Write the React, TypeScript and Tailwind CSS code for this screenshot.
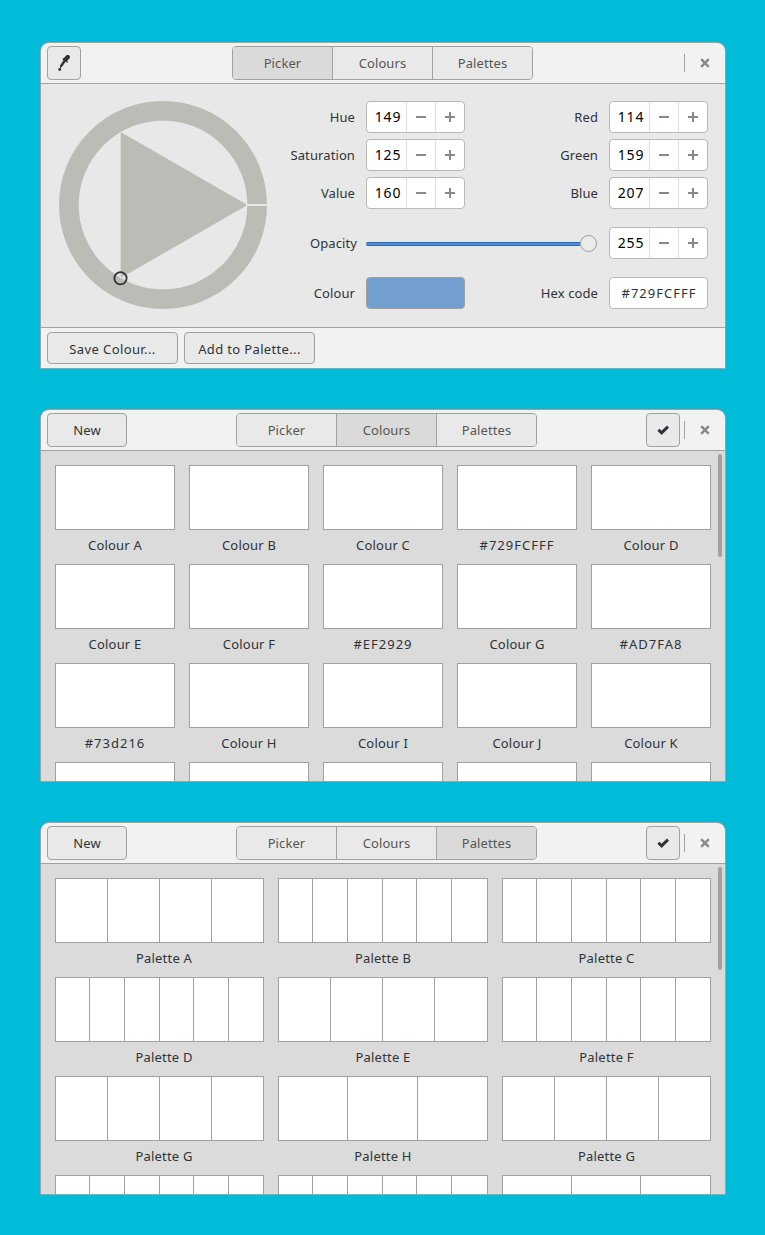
import type { ReactNode } from "react";

const TABS = ["Picker", "Colours", "Palettes"] as const;
type Tab = (typeof TABS)[number];

const COLOURS = [
  "Colour A", "Colour B", "Colour C", "#729FCFFF", "Colour D",
  "Colour E", "Colour F", "#EF2929", "Colour G", "#AD7FA8",
  "#73d216", "Colour H", "Colour I", "Colour J", "Colour K",
  "", "", "", "", "",
];

const PALETTES: [string, number][] = [
  ["Palette A", 4], ["Palette B", 6], ["Palette C", 6],
  ["Palette D", 6], ["Palette E", 4], ["Palette F", 6],
  ["Palette G", 4], ["Palette H", 3], ["Palette G", 4],
  ["", 6], ["", 6], ["", 3],
];

function Button({ className, children }: { className: string; children: ReactNode }) {
  return (
    <button className={`flex shrink-0 items-center justify-center rounded-[4px] border border-[#a1a1a1] bg-[#e9e9e9] ${className}`}>
      {children}
    </button>
  );
}

function Switcher({ active }: { active: Tab }) {
  return (
    <div className="flex h-[34px] w-[301px] overflow-hidden rounded-[4px] border border-[#a1a1a1] text-[#555753]">
      {TABS.map((tab, i) => (
        <button
          key={tab}
          className={`flex items-center justify-center ${i < 2 ? "w-[100px] border-r border-[#a1a1a1]" : "w-[99px]"} ${tab === active ? "bg-[#dadada]" : "bg-[#e9e9e9]"}`}
        >
          {tab}
        </button>
      ))}
    </div>
  );
}

function Close() {
  return (
    <svg width="10" height="10" viewBox="0 0 10 10" className="mr-[15px] ml-[15px]">
      <path d="M1.200 1.200 8.800 8.800M8.800 1.200 1.200 8.800" stroke="#888a85" strokeWidth="2.400" />
    </svg>
  );
}

function Check() {
  return (
    <svg width="12" height="10" viewBox="0 0 12 10">
      <path d="M1.400 4.700 4.600 7.900 11 1.700" fill="none" stroke="#2e3436" strokeWidth="3" />
    </svg>
  );
}

function Dropper() {
  return (
    <svg width="16" height="16" viewBox="0 0 16 16" fill="none" stroke="#2e3436" strokeLinecap="round">
      <path d="M9.700 4.300 11.800 2" strokeWidth="4.300" />
      <path d="M7.200 3.900 11.200 7" strokeWidth="1.400" />
      <path d="M8.700 5.700 5.200 10.900" strokeWidth="2.500" />
      <circle cx="3.700" cy="14.500" r="1.400" fill="#2e3436" stroke="none" />
      <path d="M5.200 11 4.100 13" strokeWidth="1" />
    </svg>
  );
}

function Window({ active, left, right, className, children }: {
  active: Tab; left: ReactNode; right?: ReactNode; className: string; children: ReactNode;
}) {
  return (
    <section className={`flex w-[686px] flex-col overflow-hidden rounded-t-[9px] border border-[#a1a1a1] ${className}`}>
      <header className={`grid h-[41px] shrink-0 items-center border-b border-[#a1a1a1] bg-[#f2f2f2] ${right ? "grid-cols-[195px_301px_1fr]" : "grid-cols-[191px_301px_1fr]"}`}>
        <div className="pl-[6px]">{left}</div>
        <Switcher active={active} />
        <div className="flex items-center justify-end">
          {right}
          <span className="ml-1 h-[18px] w-px bg-[#a1a1a1]" />
          <Close />
        </div>
      </header>
      {children}
    </section>
  );
}

function Spin({ value }: { value: number }) {
  return (
    <div className="flex h-8 w-[99px] rounded-[4px] border border-[#b8b9b4] bg-white text-black">
      <span className="flex w-[39px] items-center justify-center pl-[3px] text-[14px] tracking-[0.8px]">{value}</span>
      <span className="flex w-[29px] items-center justify-center border-l border-[#dedede]">
        <svg width="12" height="12" viewBox="0 0 12 12"><path d="M1 5h10v2H1z" fill="#888a85" /></svg>
      </span>
      <span className="flex w-[29px] items-center justify-center border-l border-[#dedede]">
        <svg width="12" height="12" viewBox="0 0 12 12"><path d="M1 5h10v2H1zM5 1h2v10H5z" fill="#888a85" /></svg>
      </span>
    </div>
  );
}

function Label({ children, className = "" }: { children: string; className?: string }) {
  return <span className={`text-right ${className}`}>{children}</span>;
}

function Wheel() {
  return (
    <svg width="210" height="210" viewBox="58 100 210 210" className="shrink-0">
      <circle cx="163" cy="205" r="94.150" fill="none" stroke="#babdb6" strokeWidth="19.700" />
      <path d="M120.700 132v146L247.500 205Z" fill="#babdb6" />
      <path d="M246 204h22v2h-22z" fill="#e8e8e8" />
      <path d="m118 275.500 3 1.500 2-1-2.500 2z" fill="#e8e8e8" />
      <circle cx="120.500" cy="278.200" r="6.100" fill="none" stroke="#2e3436" strokeWidth="1.800" />
    </svg>
  );
}

function PickerBody() {
  return (
    <>
      <div className="flex h-[243px] bg-[#e8e8e8] pt-4 pl-[17px]">
        <Wheel />
        <div className="mt-px ml-[18px] flex w-[422px] flex-col">
          <div className="flex flex-col gap-[6px]">
            {([["Hue", 149, "Red", 114], ["Saturation", 125, "Green", 159], ["Value", 160, "Blue", 207]] as const).map(([a, x, b, y]) => (
              <div key={a} className="flex items-center">
                <Label className="w-[69px]">{a}</Label>
                <div className="ml-[11px]"><Spin value={x} /></div>
                <Label className="w-[133px]">{b}</Label>
                <div className="ml-[11px]"><Spin value={y} /></div>
              </div>
            ))}
          </div>
          <div className="mt-[18px] flex items-center">
            <Label className="w-[71px]">Opacity</Label>
            <div className="ml-[9px] flex w-[231px] items-center">
              <span className="mt-px h-1 w-[214px] rounded-l-full border-y border-[#2f66ad] bg-[#4a90d9]" />
              <span className="h-[17px] w-[17px] rounded-full border border-[#999] bg-[#ebebeb]" />
            </div>
            <div className="ml-[12px]"><Spin value={255} /></div>
          </div>
          <div className="mt-[18px] flex items-center">
            <Label className="w-[69px]">Colour</Label>
            <span className="ml-[11px] h-8 w-[99px] rounded-[4px] border border-[#a1a1a1] bg-[#729fcf]" />
            <Label className="w-[133px]">Hex code</Label>
            <span className="ml-[11px] flex h-8 w-[99px] items-center justify-center rounded-[4px] border border-[#b8b9b4] bg-white pl-px tracking-[1px]">#729FCFFF</span>
          </div>
        </div>
      </div>
      <footer className="flex grow items-center gap-[6px] border-t border-[#a1a1a1] bg-[#f2f2f2] pl-[6px]">
        <Button className="h-8 w-[131px] pt-[2px] tracking-[0.4px]">Save Colour...</Button>
        <Button className="h-8 w-[131px] pt-[2px] tracking-[0.35px]">Add to Palette...</Button>
      </footer>
    </>
  );
}

function Scroller({ children }: { children: ReactNode }) {
  return (
    <div className="flex h-[330px] items-start overflow-hidden bg-[#dbdbdb] pl-[14px]">
      <div className="w-[656px] shrink-0 pt-[14px]">{children}</div>
      <span className="mt-[3px] ml-[7px] h-[103px] w-1 rounded-full bg-[#a1a1a1]" />
    </div>
  );
}

function Caption({ children, className = "" }: { children: string; className?: string }) {
  const tracking = children.startsWith("#") ? "tracking-[1px]" : "tracking-[0.2px]";
  return (
    <div className={`flex h-[34px] items-center justify-center pb-1 ${tracking} ${className}`}>
      {children}
    </div>
  );
}

function PaletteStrip({ count, span }: { count: number; span: number }) {
  const edges = Array.from({ length: count }, (_, i) => Math.floor((i * span) / count));
  return (
    <div className="flex h-[65px] border border-[#a1a1a1] bg-white">
      {edges.slice(1).map((edge, i) => (
        <span
          key={edge}
          className="shrink-0 border-r border-[#a1a1a1]"
          style={{ width: edge - edges[i] }}
        />
      ))}
    </div>
  );
}

export default function App() {
  return (
    <main className="flex h-[1235px] w-[765px] flex-col items-start bg-[#00bcd8] pt-[42px] pl-10 font-['Noto_Sans','Open_Sans',sans-serif] text-[13px] leading-[18px] tracking-[0.1px] text-[#2e3436]">
      <Window
        active="Picker"
        className="h-[327px]"
        left={<Button className="size-[34px]"><Dropper /></Button>}
      >
        <PickerBody />
      </Window>

      <Window
        active="Colours"
        className="mt-10 h-[373px]"
        left={<Button className="h-[34px] w-20">New</Button>}
        right={<Button className="size-[34px]"><Check /></Button>}
      >
        <Scroller>
          <div className="grid grid-cols-5 gap-x-[14px]">
            {COLOURS.map((name, i) => (
              <div key={i}>
                <div className="h-[65px] border border-[#a1a1a1] bg-white" />
                <Caption>{name}</Caption>
              </div>
            ))}
          </div>
        </Scroller>
      </Window>

      <Window
        active="Palettes"
        className="mt-10 h-[373px]"
        left={<Button className="h-[34px] w-20">New</Button>}
        right={<Button className="size-[34px]"><Check /></Button>}
      >
        <Scroller>
          <div className="grid grid-cols-[209px_210px_209px] gap-x-[14px]">
            {PALETTES.map(([name, count], i) => (
              <div key={i}>
                <PaletteStrip count={count} span={count === 3 && i % 3 === 1 ? 209 : 208} />
                <Caption className={i % 3 === 0 ? "pl-[9px]" : ""}>{name}</Caption>
              </div>
            ))}
          </div>
        </Scroller>
      </Window>
    </main>
  );
}
